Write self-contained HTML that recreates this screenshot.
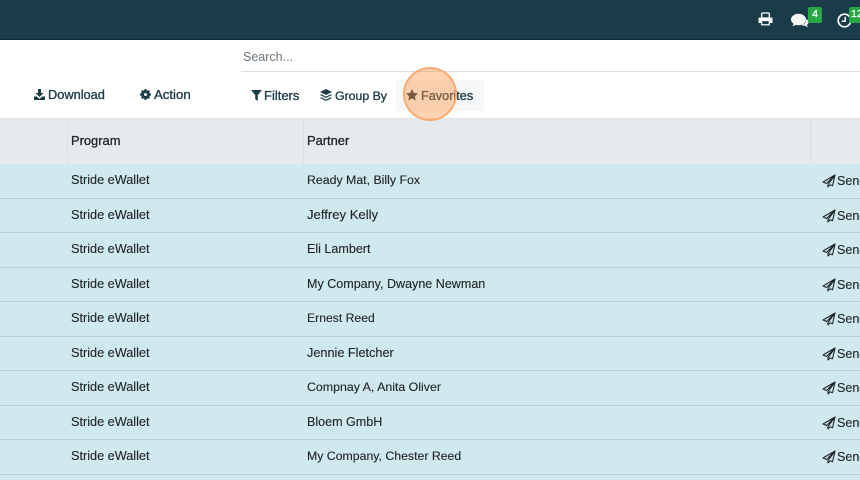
<!DOCTYPE html>
<html>
<head>
<meta charset="utf-8">
<style>
html,body{margin:0;padding:0;width:860px;height:480px;overflow:hidden;background:#fff;font-family:"Liberation Sans",sans-serif;color:#212529}
*{box-sizing:border-box}
.a{position:absolute}
.t{position:absolute;white-space:nowrap;font-size:12.55px;line-height:16px;-webkit-text-stroke:.12px #212529}
.s{font-size:12.7px}
.b{color:#1c3c48;-webkit-text-stroke:.35px #1c3c48}
.th{-webkit-text-stroke:.3px #212529}
svg{position:absolute;overflow:visible}
</style>
</head>
<body>
<!-- top bar -->
<div class="a" style="left:0;top:0;width:860px;height:40px;background:#1a3c48;border-bottom:1px solid #0f2a33"></div>
<svg style="left:758px;top:12px" width="15" height="14" viewBox="0 0 15 14" fill="none"><rect x="3.700" y="1" width="7.600" height="5" rx="1" stroke="#fff" stroke-width="1.300"/><path d="M1.500 5.500h12a1 1 0 0 1 1 1v4.500h-14v-4.500a1 1 0 0 1 1-1z" fill="#fff"/><rect x="3.700" y="8.500" width="7.600" height="4.300" fill="#1a3c48" stroke="#fff" stroke-width="1.200"/></svg>
<svg style="left:791px;top:13px" width="18" height="15" viewBox="0 0 18 15"><ellipse cx="7.500" cy="6.500" rx="7.500" ry="5.700" fill="#f4f5f5"/><path d="M3 10L1.500 13.500 6.500 11z" fill="#f4f5f5"/><path d="M15.300 6c1.700 1 2.500 2.200 2.200 3.600-.2 1-.9 1.700-1.600 2.200l1 2.300-3.500-1.600c-1.200.2-2.600 0-3.700-.6 3.400-.2 6-2.800 5.600-5.900z" fill="#f4f5f5"/></svg>
<div class="a" style="left:808px;top:7px;width:14px;height:16px;background:#28a745;border-radius:2px;color:#fff;font-size:10.500px;line-height:15px;text-align:center;-webkit-text-stroke:.2px #fff">4</div>
<svg style="left:837px;top:13px" width="15" height="15" viewBox="0 0 15 15" fill="none"><circle cx="7.500" cy="7.500" r="6.300" stroke="#fff" stroke-width="1.700"/><path d="M8.200 3.800v4.400H4.800" stroke="#fff" stroke-width="1.500"/></svg>
<div class="a" style="left:849px;top:7px;width:20px;height:16px;background:#28a745;border-radius:2px;color:#fff;font-size:10.500px;line-height:15px;padding-left:2px;-webkit-text-stroke:.2px #fff">12</div>

<!-- search -->
<div class="t" style="left:243px;top:49px;color:#6c757d;-webkit-text-stroke:0;font-size:12.500px">Search...</div>
<div class="a" style="left:241px;top:71px;width:619px;height:1px;background:#dcdfe1"></div>

<!-- actions -->
<svg style="left:34px;top:89px" width="11" height="11" viewBox="0 0 11 11" fill="#1c3c48"><path d="M4 0h3v4h2.500L5.500 8 1.500 4H4z"/><path d="M0 7.500h2.800L5.500 10l2.700-2.500H11V11H0z"/></svg>
<div class="t b" style="left:48px;top:87px;font-size:12.800px">Download</div>
<svg style="left:140px;top:88.500px" width="11" height="11" viewBox="0 0 12 12"><circle cx="6" cy="6" r="3.600" fill="none" stroke="#1c3c48" stroke-width="2.600"/><path d="M6 6L6 0M6 6L6 12M6 6L0 6M6 6L12 6M6 6L1.800 1.800M6 6L10.200 10.200M6 6L1.800 10.200M6 6L10.200 1.800" stroke="#1c3c48" stroke-width="2.100"/><circle cx="6" cy="6" r="1.700" fill="#fff"/></svg>
<div class="t b" style="left:154px;top:87px;font-size:13.200px">Action</div>

<svg style="left:251px;top:90px" width="11" height="11" viewBox="0 0 11 11" fill="#1c3c48"><path d="M0 0h11L6.800 5v6L4.200 9V5z"/></svg>
<div class="t b" style="left:264px;top:88px;font-size:13px">Filters</div>
<svg style="left:320px;top:89px" width="12" height="13" viewBox="0 0 12 13" fill="#1c3c48"><path d="M6 0l6 3-6 3-6-3z"/><path d="M1.300 5.200L6 7.600l4.700-2.400L12 6 6 9 0 6z"/><path d="M1.300 8.200L6 10.600l4.700-2.400L12 9l-6 3-6-3z"/></svg>
<div class="t b" style="left:335px;top:88px;font-size:12.300px">Group By</div>

<div class="a" style="left:396px;top:80px;width:88px;height:31px;background:#f6f7f9;border-radius:2px"></div>
<svg style="left:406px;top:89px" width="12" height="12" viewBox="0 0 12 12" fill="#1c3c48"><path d="M6 0l1.800 3.900 4.200.5-3.100 2.900.8 4.200L6 9.400 2.300 11.500l.8-4.200L0 4.400l4.200-.5z"/></svg>
<div class="t b" style="left:421px;top:88px;font-size:12.700px">Favorites</div>

<!-- table -->
<div class="a" style="left:0;top:118px;width:860px;height:46px;background:#e7eaed;border-top:1px solid #dee2e6"></div>
<div class="a" style="left:67px;top:119px;width:1px;height:45px;background:#dcdfe2"></div>
<div class="a" style="left:303px;top:119px;width:1px;height:45px;background:#dcdfe2"></div>
<div class="a" style="left:810px;top:119px;width:1px;height:45px;background:#dcdfe2"></div>
<div class="t th" style="left:71px;top:133px;font-size:12.900px">Program</div>
<div class="t th" style="left:307px;top:133px;font-size:12.900px">Partner</div>

<div class="a" style="left:0;top:164px;width:860px;height:316px;background:#d0e9ee"></div>
<div class="a" style="left:0;top:198px;width:860px;height:1px;background:#b9d3d9"></div>
<div class="a" style="left:0;top:232px;width:860px;height:1px;background:#b9d3d9"></div>
<div class="a" style="left:0;top:267px;width:860px;height:1px;background:#b9d3d9"></div>
<div class="a" style="left:0;top:301px;width:860px;height:1px;background:#b9d3d9"></div>
<div class="a" style="left:0;top:336px;width:860px;height:1px;background:#b9d3d9"></div>
<div class="a" style="left:0;top:370px;width:860px;height:1px;background:#b9d3d9"></div>
<div class="a" style="left:0;top:405px;width:860px;height:1px;background:#b9d3d9"></div>
<div class="a" style="left:0;top:439px;width:860px;height:1px;background:#b9d3d9"></div>
<div class="a" style="left:0;top:474px;width:860px;height:1px;background:#b9d3d9"></div>

<div class="t s" style="left:71px;top:172px">Stride eWallet</div><div class="t" style="left:307px;top:172px;font-size:12.330px">Ready Mat, Billy Fox</div>
<div class="t s" style="left:71px;top:207px">Stride eWallet</div><div class="t" style="left:307px;top:207px;font-size:13.100px">Jeffrey Kelly</div>
<div class="t s" style="left:71px;top:241px">Stride eWallet</div><div class="t" style="left:307px;top:241px">Eli Lambert</div>
<div class="t s" style="left:71px;top:276px">Stride eWallet</div><div class="t" style="left:307px;top:276px">My Company, Dwayne Newman</div>
<div class="t s" style="left:71px;top:310px">Stride eWallet</div><div class="t" style="left:307px;top:310px;font-size:12.200px">Ernest Reed</div>
<div class="t s" style="left:71px;top:345px">Stride eWallet</div><div class="t" style="left:307px;top:345px;font-size:12.700px">Jennie Fletcher</div>
<div class="t s" style="left:71px;top:379px">Stride eWallet</div><div class="t" style="left:307px;top:379px;font-size:12.370px">Compnay A, Anita Oliver</div>
<div class="t s" style="left:71px;top:414px">Stride eWallet</div><div class="t" style="left:307px;top:414px">Bloem GmbH</div>
<div class="t s" style="left:71px;top:448px">Stride eWallet</div><div class="t" style="left:307px;top:448px;font-size:12.300px">My Company, Chester Reed</div>

<svg style="left:822px;top:174px" width="14" height="14" viewBox="0 0 14 14" fill="none" stroke="#212529" stroke-width="1.100" stroke-linejoin="round"><path d="M13 1L1 8l3.500 1.500L13 1 6 10.500V13l2-2.200 2.500 1z"/></svg><div class="t" style="left:837px;top:173px">Send</div>
<svg style="left:822px;top:209px" width="14" height="14" viewBox="0 0 14 14" fill="none" stroke="#212529" stroke-width="1.100" stroke-linejoin="round"><path d="M13 1L1 8l3.500 1.500L13 1 6 10.500V13l2-2.200 2.500 1z"/></svg><div class="t" style="left:837px;top:208px">Send</div>
<svg style="left:822px;top:243px" width="14" height="14" viewBox="0 0 14 14" fill="none" stroke="#212529" stroke-width="1.100" stroke-linejoin="round"><path d="M13 1L1 8l3.500 1.500L13 1 6 10.500V13l2-2.200 2.500 1z"/></svg><div class="t" style="left:837px;top:242px">Send</div>
<svg style="left:822px;top:278px" width="14" height="14" viewBox="0 0 14 14" fill="none" stroke="#212529" stroke-width="1.100" stroke-linejoin="round"><path d="M13 1L1 8l3.500 1.500L13 1 6 10.500V13l2-2.200 2.500 1z"/></svg><div class="t" style="left:837px;top:277px">Send</div>
<svg style="left:822px;top:312px" width="14" height="14" viewBox="0 0 14 14" fill="none" stroke="#212529" stroke-width="1.100" stroke-linejoin="round"><path d="M13 1L1 8l3.500 1.500L13 1 6 10.500V13l2-2.200 2.500 1z"/></svg><div class="t" style="left:837px;top:311px">Send</div>
<svg style="left:822px;top:347px" width="14" height="14" viewBox="0 0 14 14" fill="none" stroke="#212529" stroke-width="1.100" stroke-linejoin="round"><path d="M13 1L1 8l3.500 1.500L13 1 6 10.500V13l2-2.200 2.500 1z"/></svg><div class="t" style="left:837px;top:346px">Send</div>
<svg style="left:822px;top:381px" width="14" height="14" viewBox="0 0 14 14" fill="none" stroke="#212529" stroke-width="1.100" stroke-linejoin="round"><path d="M13 1L1 8l3.500 1.500L13 1 6 10.500V13l2-2.200 2.500 1z"/></svg><div class="t" style="left:837px;top:380px">Send</div>
<svg style="left:822px;top:416px" width="14" height="14" viewBox="0 0 14 14" fill="none" stroke="#212529" stroke-width="1.100" stroke-linejoin="round"><path d="M13 1L1 8l3.500 1.500L13 1 6 10.500V13l2-2.200 2.500 1z"/></svg><div class="t" style="left:837px;top:415px">Send</div>
<svg style="left:822px;top:450px" width="14" height="14" viewBox="0 0 14 14" fill="none" stroke="#212529" stroke-width="1.100" stroke-linejoin="round"><path d="M13 1L1 8l3.500 1.500L13 1 6 10.500V13l2-2.200 2.500 1z"/></svg><div class="t" style="left:837px;top:449px">Send</div>

<!-- highlight circle -->
<div class="a" style="left:403px;top:67px;width:54px;height:54px;border-radius:50%;background:rgba(253,145,60,.4);border:2px solid rgba(248,170,110,.95)"></div>
</body>
</html>
